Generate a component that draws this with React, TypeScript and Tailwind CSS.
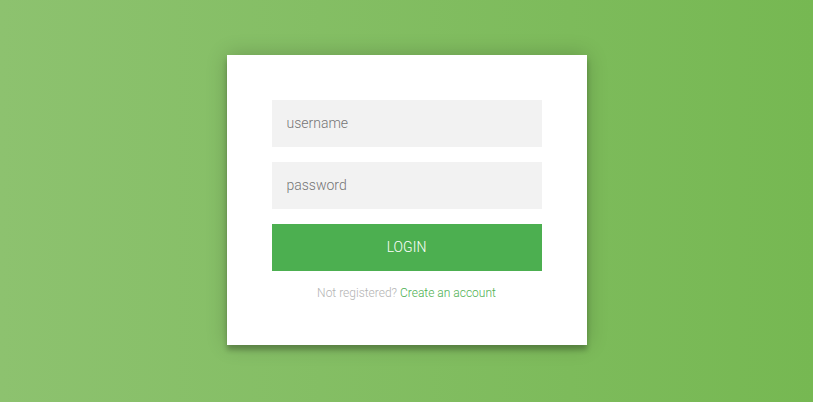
export default function App() {
  return (
    <div className="min-h-[402px] w-full bg-gradient-to-l from-[#76b852] to-[#8dc26f] pt-[55px] font-['Roboto',sans-serif] font-light">
      <form
        className="mx-auto w-[360px] bg-white p-[45px] text-center shadow-[0_0_20px_rgba(0,0,0,0.2),0_5px_5px_rgba(0,0,0,0.24)]"
        onSubmit={(e) => e.preventDefault()}
      >
        <input
          type="text"
          placeholder="username"
          className="mb-[15px] box-border w-full bg-[#f2f2f2] p-[15px] text-[14px] leading-[17px] text-[#333] outline-none placeholder:text-[#757575]"
        />
        <input
          type="password"
          placeholder="password"
          className="mb-[15px] box-border w-full bg-[#f2f2f2] p-[15px] text-[14px] leading-[17px] text-[#333] outline-none placeholder:text-[#757575]"
        />
        <button
          type="submit"
          className="w-full bg-[#4caf50] p-[15px] text-[14px] leading-[17px] font-light uppercase text-white"
        >
          login
        </button>
        <p className="mt-[15px] text-[12px] leading-[14px] text-[#b3b3b3]">
          Not registered? <a href="#" className="text-[#4caf50]">Create an account</a>
        </p>
      </form>
    </div>
  );
}
